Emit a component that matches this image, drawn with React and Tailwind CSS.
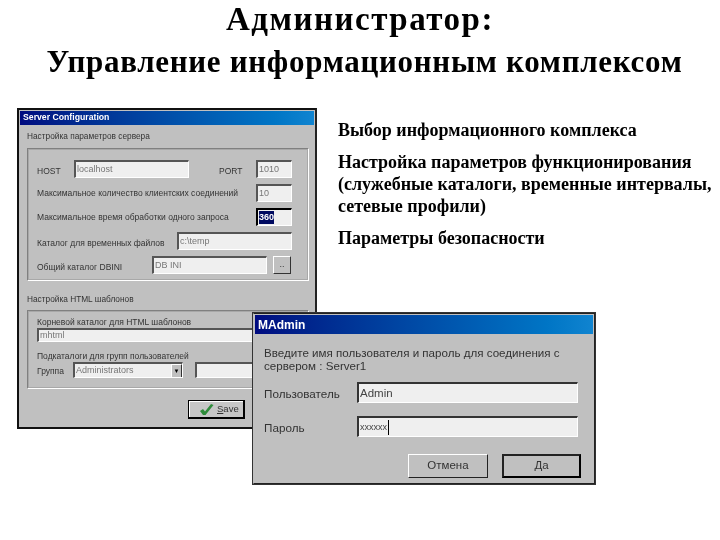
import React from 'react';

const sans = 'font-["Liberation_Sans",sans-serif]';

const Field = ({ className = '', children }) => (
  <div className={`flex h-[18px] shrink-0 items-center overflow-hidden border-t-2 border-l-2 border-t-[#555] border-l-[#555] border-r border-b border-r-white border-b-white bg-[#efefef] pl-px text-[9px] text-[#777] ${className}`}>
    {children}
  </div>
);

const Group = ({ className = '', children }) => (
  <div className={`border border-t-[#808080] border-l-[#808080] border-r-white border-b-white outline outline-1 -outline-offset-2 outline-[#a8a8a8] ${className}`}>
    {children}
  </div>
);

const TitleBar = ({ className = '', children }) => (
  <div className={`flex items-center bg-gradient-to-r from-[#000a80] to-[#1084d0] font-bold text-white ${className}`}>
    {children}
  </div>
);

const Label = ({ className = '', children }) => (
  <span className={`whitespace-nowrap text-[8.5px] text-[#333] ${className}`}>{children}</span>
);

const ServerWindow = () => (
  <div className={`absolute left-[17px] top-[108px] h-[321px] w-[300px] overflow-hidden border-2 border-t-[#111] border-l-[#111] border-r-[#222] border-b-[#111] bg-[#c0c0c0] p-px ${sans}`}>
    <TitleBar className="h-[14px] pl-[3px] text-[8.7px]">Server Configuration</TitleBar>
    <div className="pl-[7px] pr-2">
      <div className="mt-[4px] h-[14px] text-[8.3px] leading-[14px] text-[#333]">Настройка параметров сервера</div>
      <Group className="mt-[5px] flex h-[133px] w-[282px] flex-col gap-[6px] pl-[9px] pr-4 pt-[11px]">
        <div className="flex items-end">
          <Label className="w-[37px]">HOST</Label>
          <Field className="w-[115px]">localhost</Field>
          <Label className="ml-[30px] w-[37px]">PORT</Label>
          <Field className="w-[36px]">1010</Field>
        </div>
        <div className="flex items-center justify-between">
          <Label>Максимальное количество клиентских соединений</Label>
          <Field className="w-[36px]">10</Field>
        </div>
        <div className="flex items-center justify-between">
          <Label>Максимальное время обработки одного запроса</Label>
          <Field className="w-[36px] !border-t-black !border-l-black"><span className="bg-[#000a60] font-bold text-white">360</span></Field>
        </div>
        <div className="flex items-end justify-between">
          <Label>Каталог для временных файлов</Label>
          <Field className="w-[115px]">c:\temp</Field>
        </div>
        <div className="flex items-end">
          <Label className="w-[115px]">Общий каталог DBINI</Label>
          <Field className="w-[115px] text-[#222]">DB INI</Field>
          <div className="ml-[6px] flex h-[18px] w-[18px] items-center justify-center border border-t-white border-l-white border-r-[#333] border-b-[#333] text-[9px] text-[#333]">..</div>
        </div>
      </Group>
      <div className="mt-[11px] h-[14px] text-[8.3px] leading-[14px] text-[#333]">Настройка HTML шаблонов</div>
      <Group className="mt-[4px] h-[79px] w-[282px] pl-[9px] pt-[5px]">
        <div className="text-[8.5px] leading-[12px] text-[#333]">Корневой каталог для HTML шаблонов</div>
        <Field className="!h-[14px] w-[230px] text-[#222]">mhtml</Field>
        <div className="mt-[8px] text-[8.5px] leading-[12px] text-[#333]">Подкаталоги для групп пользователей</div>
        <div className="flex items-end">
          <Label className="w-[36px]">Группа</Label>
          <Field className="relative !h-[16px] w-[110px]">
            Administrators
            <span className="absolute right-0 top-0 flex h-[14px] w-[11px] items-center justify-center border border-t-white border-l-white border-r-[#333] border-b-[#333] bg-[#c0c0c0] text-[6px] text-black">▼</span>
          </Field>
          <Field className="ml-3 !h-[16px] w-[60px]" />
        </div>
      </Group>
      <div className="ml-[161px] mt-[11px] flex h-[19px] w-[57px] items-center gap-[3px] border border-r-2 border-b-2 border-black bg-[#c6c6c6] pl-[10px] text-[9.5px] text-[#333] shadow-[inset_1px_1px_0_#fff]">
        <svg width="15" height="13" viewBox="0 0 15 13" className="shrink-0">
          <path d="M1 8 L4 6 L6 8.5 L12 1 L14.5 2 L6.5 12 L4 12 Z" fill="#2e8b3a" />
        </svg>
        <span><span className="underline">S</span>ave</span>
      </div>
    </div>
  </div>
);

const LoginField = ({ className = '', children }) => (
  <div className={`flex h-[21px] w-[221px] items-center border-t-2 border-l-2 border-t-[#333] border-l-[#333] border-r border-b border-r-white border-b-white bg-[#efefef] pl-px text-[11.5px] text-[#444] ${className}`}>
    {children}
  </div>
);

const LoginButton = ({ className = '', children }) => (
  <div className={`flex h-[24px] items-center justify-center text-[11.5px] text-[#333] ${className}`}>{children}</div>
);

const LoginWindow = () => (
  <div className={`absolute left-[252px] top-[312px] h-[173px] w-[344px] border-2 border-t-[#222] border-l-[#c0c0c0] border-r-[#222] border-b-[#222] bg-[#c0c0c0] p-px outline outline-1 outline-[#333] -outline-offset-1 ${sans}`}>
    <TitleBar className="h-[19px] pl-[3px] text-[12px]">MAdmin</TitleBar>
    <div className="pl-[9px] pr-[12px]">
      <div className="mt-[12px] text-[11.6px] leading-[13px] text-[#333]">
        Введите имя пользователя и пароль для соединения с<br />сервером : Server1
      </div>
      <div className="mt-[10px] flex items-center">
        <span className="w-[93px] pt-[3px] text-[11.7px] leading-[14px] text-[#333]">Пользователь</span>
        <LoginField className="pt-[2px]">Admin</LoginField>
      </div>
      <div className="mt-[13px] flex items-center">
        <span className="w-[93px] pt-[3px] text-[11.7px] leading-[14px] text-[#333]">Пароль</span>
        <LoginField>
          <span className="text-[9px] leading-none">xxxxxx</span>
          <span className="ml-px h-[15px] w-px bg-black" />
        </LoginField>
      </div>
      <div className="ml-[144px] mt-[17px] flex gap-[14px]">
        <LoginButton className="w-[80px] border border-t-white border-l-white border-r-[#222] border-b-[#222]">Отмена</LoginButton>
        <LoginButton className="w-[79px] border-2 border-t-[#222] border-l-[#222] border-r-black border-b-black">Да</LoginButton>
      </div>
    </div>
  </div>
);

export default function App() {
  return (
    <div className={`relative h-[540px] w-[720px] overflow-hidden bg-white text-black blur-[0.3px] font-["Liberation_Serif",serif]`}>
      <h1 className="h-[38px] text-center text-[33px] font-bold leading-[38px] tracking-[1.5px]">Администратор:</h1>
      <h2 className="mt-[5px] pl-[9px] text-center text-[31px] font-bold leading-[38px] tracking-[0.7px]">Управление информационным комплексом</h2>
      <div className="absolute left-[338px] top-[119px] w-[382px] whitespace-nowrap text-[18px] font-bold leading-[22px]">
        <p>Выбор информационного комплекса</p>
        <p className="mt-[10px]">Настройка параметров функционирования<br />(служебные каталоги, временные интервалы,<br />сетевые профили)</p>
        <p className="mt-[10px]">Параметры безопасности</p>
      </div>
      <ServerWindow />
      <LoginWindow />
    </div>
  );
}
